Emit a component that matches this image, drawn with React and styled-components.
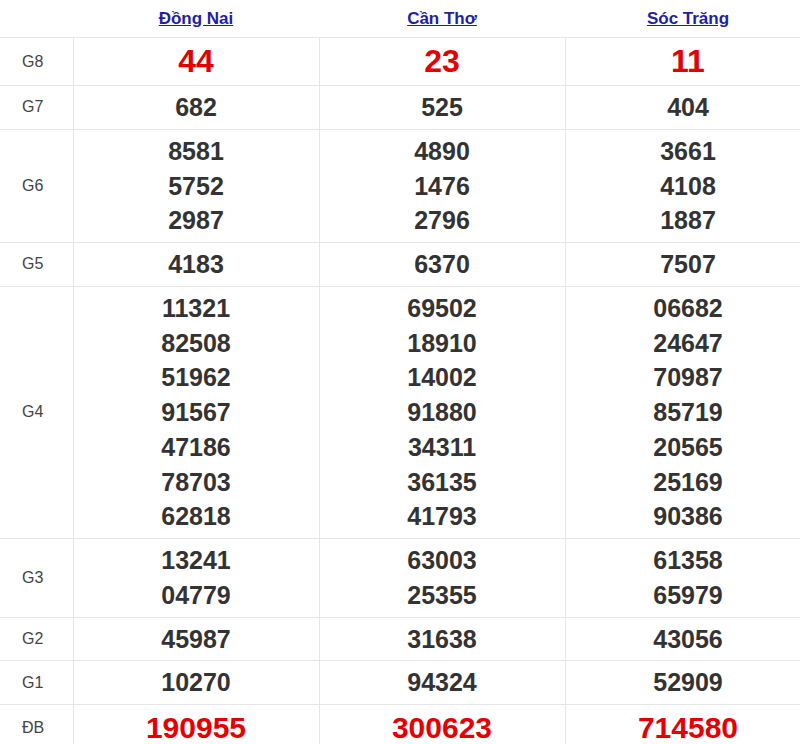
import styled, { createGlobalStyle } from "styled-components";

const GlobalStyle = createGlobalStyle`
  html, body {
    margin: 0;
    padding: 0;
    background: #fff;
    overflow: hidden;
  }
  body {
    font-family: "Liberation Sans", Arial, sans-serif;
  }
`;

const provinces = ["Đồng Nai", "Cần Thơ", "Sóc Trăng"];

const results = [
  { label: "G8", big: true, values: [["44"], ["23"], ["11"]] },
  { label: "G7", values: [["682"], ["525"], ["404"]] },
  {
    label: "G6",
    values: [
      ["8581", "5752", "2987"],
      ["4890", "1476", "2796"],
      ["3661", "4108", "1887"],
    ],
  },
  { label: "G5", values: [["4183"], ["6370"], ["7507"]] },
  {
    label: "G4",
    values: [
      ["11321", "82508", "51962", "91567", "47186", "78703", "62818"],
      ["69502", "18910", "14002", "91880", "34311", "36135", "41793"],
      ["06682", "24647", "70987", "85719", "20565", "25169", "90386"],
    ],
  },
  {
    label: "G3",
    values: [
      ["13241", "04779"],
      ["63003", "25355"],
      ["61358", "65979"],
    ],
  },
  { label: "G2", values: [["45987"], ["31638"], ["43056"]] },
  { label: "G1", values: [["10270"], ["94324"], ["52909"]] },
  { label: "ĐB", special: true, values: [["190955"], ["300623"], ["714580"]] },
];

const Table = styled.table`
  width: 811px;
  table-layout: fixed;
  border-collapse: collapse;
`;

const Col = styled.col`
  width: ${(p) => (p.$label ? "73px" : "246px")};
`;

const HeadCell = styled.th`
  height: 37px;
  padding: 0;
  border-bottom: 1px solid #e6e6e6;
  text-align: center;
  vertical-align: middle;
`;

const ProvinceLink = styled.a`
  color: #1f1fa3;
  font-size: 17px;
  font-weight: bold;
  text-decoration: underline;
`;

const LabelCell = styled.td`
  padding: 0 0 0 22px;
  border-bottom: 1px solid #e6e6e6;
  border-right: 1px solid #e6e6e6;
  color: #444;
  font-size: 16px;
  vertical-align: middle;
`;

const NumberCell = styled.td`
  padding: 4px 0;
  border: 1px solid #e6e6e6;
  border-top: none;
  text-align: center;
  vertical-align: middle;
`;

const Number = styled.div`
  font-weight: bold;
  font-size: ${(p) => (p.$big ? "32px" : p.$special ? "30px" : "25px")};
  line-height: ${(p) => (p.$big ? "39px" : p.$special ? "38px" : "34.75px")};
  color: ${(p) => (p.$big || p.$special ? "#e40000" : "#333")};
`;

export default function App() {
  return (
    <>
      <GlobalStyle />
      <Table>
        <colgroup>
          <Col $label />
          <Col />
          <Col />
          <Col />
        </colgroup>
        <thead>
          <tr>
            <HeadCell />
            {provinces.map((name) => (
              <HeadCell key={name}>
                <ProvinceLink href="#">{name}</ProvinceLink>
              </HeadCell>
            ))}
          </tr>
        </thead>
        <tbody>
          {results.map((row) => (
            <tr key={row.label}>
              <LabelCell>{row.label}</LabelCell>
              {row.values.map((list, i) => (
                <NumberCell key={i}>
                  {list.map((num, j) => (
                    <Number key={j} $big={row.big} $special={row.special}>
                      {num}
                    </Number>
                  ))}
                </NumberCell>
              ))}
            </tr>
          ))}
        </tbody>
      </Table>
    </>
  );
}
